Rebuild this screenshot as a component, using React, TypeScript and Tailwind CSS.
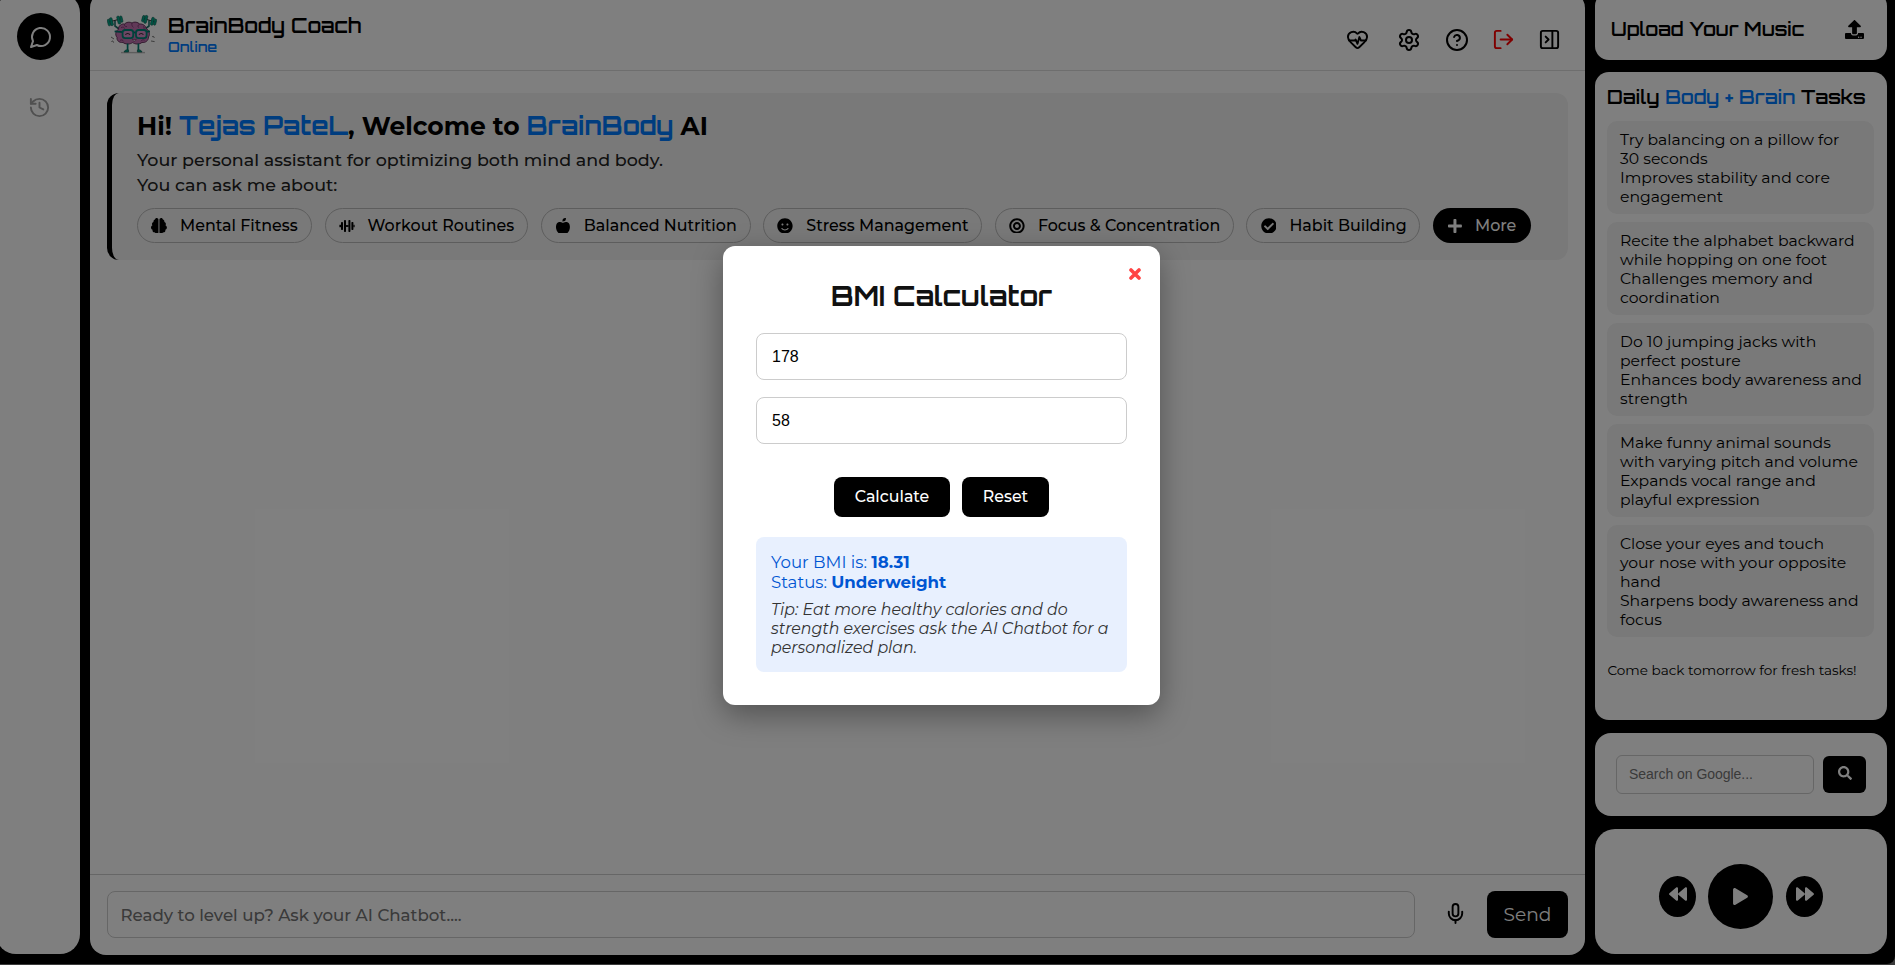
import type { ReactNode } from "react";
import { HeartPulse, Settings, CircleHelp, LogOut, PanelRightClose, History, Mic } from "lucide-react";
import { FaAppleAlt, FaBackward, FaBullseye, FaCheckCircle, FaForward, FaPlay, FaPlus, FaSearch, FaSmile, FaUpload } from "react-icons/fa";
import { FaBrain } from "react-icons/fa6";

function Mascot() {
  return (
    <svg width="50" height="40" viewBox="0 0 50 40" fill="none">
      <g stroke="#1c6f66" strokeWidth="1.6" strokeLinecap="round">
        <path d="M12 15 L8 12 L8 7" />
        <path d="M38 15 L42 12 L42 7" />
      </g>
      <g stroke="#333" strokeWidth="1">
        <path d="M2 8 L15 4.5" />
        <path d="M35 4 L48 8" />
      </g>
      <g fill="#00a888" stroke="#155e55" strokeWidth="0.6">
        <rect x="0.6" y="5.2" width="2.4" height="6.6" rx="1" transform="rotate(-14 2 8)" />
        <rect x="3.2" y="3.8" width="2.6" height="8" rx="1" transform="rotate(-14 4 8)" />
        <rect x="10.4" y="2" width="2.6" height="8" rx="1" transform="rotate(-14 12 6)" />
        <rect x="13.2" y="2" width="2.2" height="6.4" rx="1" transform="rotate(-14 14 5)" />
        <rect x="35" y="1.4" width="2.4" height="6.4" rx="1" transform="rotate(14 36 5)" />
        <rect x="37.6" y="1.4" width="2.6" height="8" rx="1" transform="rotate(14 39 5)" />
        <rect x="44.2" y="3.4" width="2.6" height="8" rx="1" transform="rotate(14 46 7)" />
        <rect x="47" y="5" width="2.2" height="6.2" rx="1" transform="rotate(14 48 8)" />
      </g>
      <path
        d="M25 9 C27 7.4 31 8 32.5 10 C36 9.6 39 12 39 14.5 C42 16 43.6 20 41.5 23 C41.5 27 38 29 35 28.4 C32.5 30.6 28 30.4 25.6 28.6 C23 30.6 18 30.4 16 28.4 C12 29 9.6 26.4 10 23.4 C7.6 20.4 9 16.4 11.6 15.2 C11 12 14.5 9.4 17.6 10 C19 8 23 7.6 25 9 Z"
        fill="#c272b0"
        stroke="#5a2a55"
        strokeWidth="0.9"
      />
      <path
        d="M25 9 C24.4 11 25.4 12.6 26.4 13.4 M17.6 10 C17 11.4 18 13 20 12.6 M32.5 10 C31 11 30.6 12.4 31.6 13.6 M14 13.6 C16 12.6 17.4 13.4 17.6 14.6 M36 12.4 C37.6 13.2 37.4 14.4 36.6 15 M13 26.4 C14.4 25.4 16 26 16.6 27.4 M37.6 26.2 C36 25.4 34.6 26 34 27.2"
        stroke="#7a3a72"
        strokeWidth="0.9"
      />
      <path d="M7.6 17.4 L16 18.2 M43 17.4 L36 18.2 M26 19 C27 18.2 28 18.2 29 19" stroke="#00756a" strokeWidth="1.8" />
      <g stroke="#008576" strokeWidth="1.8" fill="#d98cc8">
        <rect x="15.6" y="16" width="10.6" height="8.2" rx="2.6" />
        <rect x="29" y="16" width="10.6" height="8.2" rx="2.6" />
      </g>
      <path d="M18.4 20.8 C19.4 19 22 19 23 20.8 M32 20.8 C33 19 35.4 19 36.4 20.8" stroke="#333" strokeWidth="1.1" />
      <path d="M25.4 25.4 C26 27.6 28.6 27.6 29.2 25.4 Z" fill="#fff" stroke="#5a2a55" strokeWidth="0.7" />
      <path d="M4 23 L7 25 M4.4 28 C5 26.6 6.4 26.6 6.6 28.6 M45 23 C46 21.6 47.6 22.6 47 24 M44 27 L47.6 27.6" stroke="#555" strokeWidth="0.8" />
      <path d="M14 38.6 H38" stroke="#bbb" strokeWidth="1.4" />
      <path d="M20.6 29.6 V36.4 M31.4 29.6 V36.4" stroke="#007f73" strokeWidth="1.7" />
      <path d="M17 38 C17.6 35.8 20.4 35.4 21.6 36 V38 Z M35 38 C34.4 35.8 31.6 35.4 30.4 36 V38 Z" fill="#00a08a" stroke="#155e55" strokeWidth="0.7" />
    </svg>
  );
}

function BarbellIcon() {
  return (
    <svg width="16" height="16" viewBox="0 0 16 16" fill="currentColor">
      <rect x="0.4" y="6.8" width="1.6" height="2.4" />
      <rect x="2" y="4" width="2" height="8" rx="0.7" />
      <rect x="5" y="2" width="2" height="12" rx="0.7" />
      <rect x="7" y="7.1" width="2.6" height="1.8" />
      <rect x="9.4" y="2" width="2" height="12" rx="0.7" />
      <rect x="12.4" y="4" width="2" height="8" rx="0.7" />
      <rect x="14.4" y="6.8" width="1.2" height="2.4" />
    </svg>
  );
}

const topics: { label: string; icon: ReactNode; width: string }[] = [
  { label: "Mental Fitness", icon: <FaBrain />, width: "w-[175px]" },
  { label: "Workout Routines", icon: <BarbellIcon />, width: "w-[203.5px]" },
  { label: "Balanced Nutrition", icon: <FaAppleAlt />, width: "w-[210px]" },
  { label: "Stress Management", icon: <FaSmile />, width: "w-[219px]" },
  { label: "Focus & Concentration", icon: <FaBullseye />, width: "w-[239px]" },
  { label: "Habit Building", icon: <FaCheckCircle />, width: "w-[174px]" },
];

const tasks = [
  ["Try balancing on a pillow for\n30 seconds", "Improves stability and core engagement"],
  ["Recite the alphabet backward while hopping on one foot", "Challenges memory and coordination"],
  ["Do 10 jumping jacks with perfect posture", "Enhances body awareness and strength"],
  ["Make funny animal sounds with varying pitch and volume", "Expands vocal range and playful expression"],
  ["Close your eyes and touch\nyour nose with your opposite\nhand", "Sharpens body awareness and focus"],
];

function Sidebar() {
  return (
    <aside className="-mt-[7px] -ml-1 flex h-[961px] w-[84px] shrink-0 flex-col items-center rounded-[20px] bg-white pt-5">
      <button className="ml-[5px] flex size-[47px] items-center justify-center rounded-full bg-black text-white">
        <svg width="24" height="24" viewBox="0 0 24 24" fill="none" stroke="currentColor" strokeWidth="2" strokeLinecap="round" strokeLinejoin="round">
          <path d="M7.9 20A9 9 0 1 0 4 16.1L2 22Z" />
        </svg>
      </button>
      <History className="mt-9 ml-[3px] text-[#a0a0a0]" size={23} strokeWidth={2} />
    </aside>
  );
}

function Header() {
  return (
    <header className="flex h-[79px] shrink-0 justify-between border-b border-[#dcdcdc] pt-2 pr-6 pl-[17px]">
      <div className="flex pt-[14px]">
        <Mascot />
        <div className="-mt-[2px] ml-[11px] font-['Orbitron','DejaVu_Sans',sans-serif] font-semibold">
          <div className="h-[25.5px] text-[20px] leading-[27px]">BrainBody Coach</div>
          <div className="text-[14.2px] leading-[18px] text-[#007bff]">Online</div>
        </div>
      </div>
      <div className="flex h-[79px] items-center">
        <HeartPulse size={23} className="mr-[28px]" />
        <Settings size={24} className="mr-[24px]" />
        <CircleHelp size={24} className="mr-[23px]" />
        <LogOut size={23} className="mr-[23px] text-[#ff0000]" />
        <PanelRightClose size={23} />
      </div>
    </header>
  );
}

function Welcome() {
  return (
    <section className="mx-[17px] mt-[22px] h-[167px] rounded-[12px] border-l-[5px] border-black bg-[#f2f2f2] pt-[18px] pl-[25px]">
      <h1 className="h-[30px] text-[25px] leading-[30px] font-bold whitespace-nowrap">
        Hi! <span className="font-['Orbitron','DejaVu_Sans',sans-serif] text-[#007bff]">Tejas PateL</span>, Welcome to{" "}
        <span className="font-['Orbitron','DejaVu_Sans',sans-serif] text-[#007bff]">BrainBody</span> AI
      </h1>
      <p className="mt-[6px] text-[17.5px] leading-[25px] font-medium text-[#222]">Your personal assistant for optimizing both mind and body.</p>
      <p className="text-[17.5px] leading-[25px] font-medium text-[#222]">You can ask me about:</p>
      <div className="mt-[11px] flex gap-[12.6px] text-[15.9px] font-medium">
        {topics.map((t) => (
          <div key={t.label} className={`flex h-[35px] shrink-0 items-center rounded-full border border-[#bbb] pl-[13px] whitespace-nowrap ${t.width}`}>
            <span className="mr-[13px] flex w-4 justify-center">{t.icon}</span>
            {t.label}
          </div>
        ))}
        <div className="flex h-[35px] w-[98px] shrink-0 items-center rounded-full bg-black pl-[14px] text-white">
          <FaPlus className="mr-[12px]" />
          More
        </div>
      </div>
    </section>
  );
}

function Composer() {
  return (
    <footer className="mt-auto flex h-[81px] shrink-0 border-t border-[#ccc] pt-4 pl-[17px]">
      <div className="flex h-[47px] w-[1308px] items-center rounded-lg border border-[#ccc] pt-px pl-[12.5px] text-[16.65px] font-medium text-[#757575]">
        Ready to level up? Ask your AI Chatbot....
      </div>
      <div className="flex h-[45px] w-[72px] items-center justify-center pl-2">
        <Mic size={23} />
      </div>
      <button className="h-[47px] w-[81px] rounded-lg bg-black text-[18.6px] text-white">Send</button>
    </footer>
  );
}

function RightColumn() {
  return (
    <div className="ml-[10px] flex w-[292px] shrink-0 flex-col">
      <section className="-mt-2 flex h-[68px] items-center justify-between rounded-[14px] bg-white pt-[6px] pr-[23px] pl-[16px]">
        <h2 className="font-['Orbitron','DejaVu_Sans',sans-serif] text-[18.9px] font-semibold">Upload Your Music</h2>
        <FaUpload size={19} />
      </section>
      <section className="mt-3 h-[648px] rounded-[14px] bg-white pt-[11px] pr-[13px] pl-[12px]">
        <h2 className="h-[28px] font-['Orbitron','DejaVu_Sans',sans-serif] text-[18.9px] leading-[28px] font-semibold whitespace-nowrap">
          Daily <span className="text-[#007bff]">Body + Brain</span> Tasks
        </h2>
        <ul className="mt-[10px] flex flex-col gap-2">
          {tasks.map(([title, benefit]) => (
            <li key={title} className="rounded-[10px] bg-[#f2f2f2] pt-[8.5px] pr-2 pb-[8.5px] pl-[13px] text-[15.65px] leading-[19px] whitespace-pre-line">
              <div>{title}</div>
              <div>{benefit}</div>
            </li>
          ))}
        </ul>
        <p className="mt-[23px] pl-[0.5px] text-[13.6px] leading-5 whitespace-nowrap">Come back tomorrow for fresh tasks!</p>
      </section>
      <section className="mt-[13px] flex h-[83px] items-center rounded-[16px] bg-white pl-[21px]">
        <div className="flex h-[39px] w-[198px] items-center rounded-[6px] border border-[#ccc] pl-[12px] font-['Liberation_Sans',sans-serif] text-[14px] tracking-[-0.03px] text-[#757575]">
          Search on Google...
        </div>
        <button className="ml-[9px] flex h-[37px] w-[43px] items-center justify-center rounded-[6px] bg-black pb-[3px] text-white">
          <FaSearch size={14} />
        </button>
      </section>
      <section className="mt-[13px] flex h-[125px] items-center rounded-[20px] bg-white pt-[10px] pl-[64px]">
        <button className="flex h-[41px] w-[37px] items-center justify-center rounded-[50%] bg-black pb-[5px] text-white">
          <FaBackward size={18} />
        </button>
        <button className="ml-3 flex size-[65px] items-center justify-center rounded-full bg-black text-white">
          <FaPlay size={17} />
        </button>
        <button className="ml-[13px] flex h-[41px] w-[37px] items-center justify-center rounded-[50%] bg-black pb-[5px] text-white">
          <FaForward size={18} />
        </button>
      </section>
    </div>
  );
}

function BmiModal() {
  return (
    <div className="relative h-[459px] w-[437px] rounded-[12px] bg-white px-[33px] pt-[33px] shadow-[0_10px_30px_rgba(0,0,0,0.35)]">
      <button className="absolute top-[22px] right-[19px] text-[#ff4444]">
        <svg width="12" height="12" viewBox="0 0 12 12" stroke="currentColor" strokeWidth="3.6" strokeLinecap="round">
          <path d="M2 2 L10 10 M10 2 L2 10" />
        </svg>
      </button>
      <h2 className="h-[34px] text-center font-['Orbitron','DejaVu_Sans',sans-serif] text-[27.2px] leading-[34px] font-bold text-[#111]">BMI Calculator</h2>
      <div className="mt-5 flex h-[47px] items-center rounded-lg border border-[#ccc] pl-[15px] font-['Liberation_Sans',sans-serif] text-[16px]">178</div>
      <div className="mt-[17px] flex h-[47px] items-center rounded-lg border border-[#ccc] pl-[15px] font-['Liberation_Sans',sans-serif] text-[16px]">58</div>
      <div className="mt-[33px] flex gap-3 pl-[78px] text-[15.8px] font-medium text-white">
        <button className="h-10 w-[116px] rounded-lg bg-black">Calculate</button>
        <button className="h-10 w-[87px] rounded-lg bg-black">Reset</button>
      </div>
      <div className="mt-5 h-[135px] rounded-lg bg-[#e8f0fe] pt-[15px] pl-[15px] text-[#0056d2]">
        <div className="text-[16.6px] leading-5">
          Your BMI is: <b>18.31</b>
        </div>
        <div className="text-[16.6px] leading-5">
          Status: <b>Underweight</b>
        </div>
        <p className="mt-[8px] w-[345px] text-[15.8px] leading-[19px] text-[#333] italic">
          Tip: Eat more healthy calories and do strength exercises ask the AI Chatbot for a personalized plan.
        </p>
      </div>
    </div>
  );
}

export default function App() {
  return (
    <div className="relative h-[965px] w-[1895px] overflow-hidden bg-[#777] font-['Montserrat','Inter',sans-serif] text-black">
      <div className="flex h-[964px] overflow-hidden rounded-br-[8px] bg-black">
        <Sidebar />
        <main className="-mt-2 ml-[10px] flex h-[963px] w-[1495px] shrink-0 flex-col rounded-[16px] bg-white">
          <Header />
          <Welcome />
          <Composer />
        </main>
        <RightColumn />
      </div>
      <div className="absolute inset-0 flex justify-center bg-black/50 pt-[246px] pr-3">
        <BmiModal />
      </div>
    </div>
  );
}
